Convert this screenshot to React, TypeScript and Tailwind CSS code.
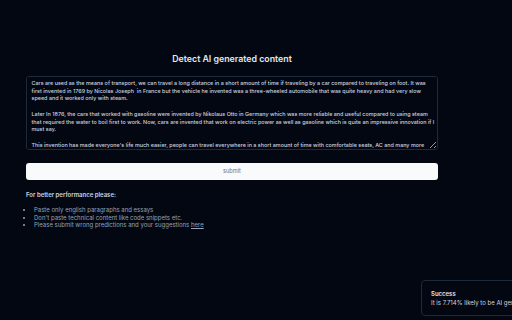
import { useState } from "react";

const SAMPLE = `Cars are used as the means of transport, we can travel a long distance in a short amount of time if traveling by a car compared to traveling on foot. It was first invented in 1769 by Nicolas Joseph  in France but the vehicle he invented was a three-wheeled automobile that was quite heavy and had very slow speed and it worked only with steam.

Later In 1876, the cars that worked with gasoline were invented by Nikolaus Otto in Germany which was more reliable and useful compared to using steam that required the water to boil first to work. Now, cars are invented that work on electric power as well as gasoline which is quite an impressive innovation if I must say.

This invention has made everyone's life much easier, people can travel everywhere in a short amount of time with comfortable seats, AC and many more`;

const TIPS = [
  "Paste only english paragraphs and essays",
  "Don't paste technical content like code snippets etc.",
];

export default function App() {
  const [text, setText] = useState(SAMPLE);

  return (
    <div className="relative h-[320px] w-[512px] overflow-hidden bg-[#030711] font-['Inter',sans-serif] text-[#e2e8f0]">
      <main className="ml-[26px] flex w-[412px] flex-col pt-[52px]">
        <h1 className="text-center text-[8.8px] font-semibold leading-[14px] text-[#e2e8f0]">
          Detect AI generated content
        </h1>

        <textarea
          value={text}
          onChange={(e) => setText(e.target.value)}
          className="mt-[10px] h-[74px] w-full resize-y rounded-[3px] border border-[#1e293b] bg-[#030711] py-[3px] pl-[4.5px] pr-[2px] text-[5.42px] leading-[7.7px] font-medium text-[#cbd5e1] outline-none"
        />

        <button
          type="button"
          className="mt-[13px] h-[17px] w-full rounded-[3px] bg-[#f8fafc] text-[5.6px] text-[#64748b]"
        >
          submit
        </button>

        <h2 className="mt-[10px] text-[6px] leading-[10px] font-semibold text-[#cbd5e1]">
          For better performance please:
        </h2>

        <ul className="mt-[6px] flex list-disc flex-col pl-[8px] text-[6px] leading-[7.7px] text-[#94a3b8] marker:text-[#94a3b8]">
          {TIPS.map((tip) => (
            <li key={tip}>{tip}</li>
          ))}
          <li>
            Please submit wrong predictions and your suggestions{" "}
            <a href="#" className="underline">
              here
            </a>
          </li>
        </ul>
      </main>

      {/* toast */}
      <div className="absolute left-[421px] top-[280px] w-[130px] rounded-[4px] border border-[#1e293b] bg-[#030711] px-[9px] py-[8px]">
        <div className="text-[6px] leading-[9px] font-semibold text-[#e2e8f0]">Success</div>
        <div className="whitespace-nowrap text-[6px] leading-[9px] text-[#cbd5e1]">
          It is 7.714% likely to be AI generated
        </div>
      </div>
    </div>
  );
}
